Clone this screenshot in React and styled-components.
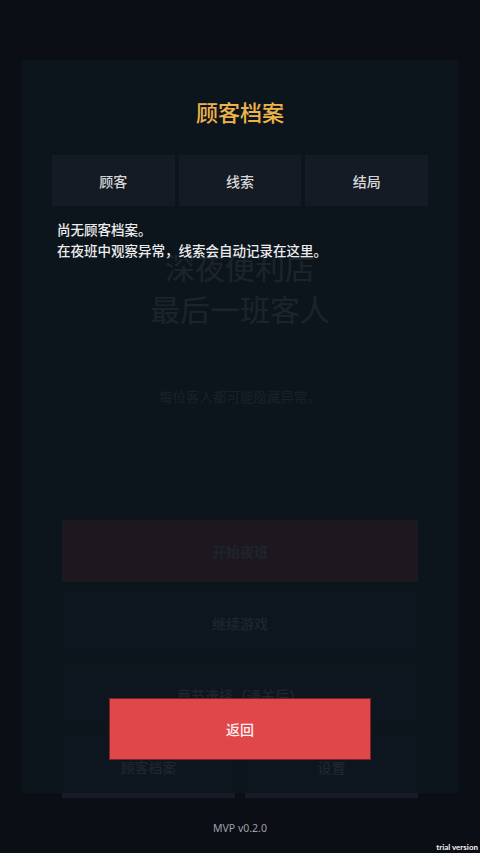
import styled, { createGlobalStyle } from "styled-components";

const GlobalStyle = createGlobalStyle`
  * { box-sizing: border-box; }
  html, body {
    margin: 0;
    padding: 0;
    background: #0c0e16;
    font-family: "Noto Sans", "Noto Sans CJK SC", sans-serif;
  }
`;

const Screen = styled.div`
  position: relative;
  height: 853px;
  overflow: hidden;
  display: flex;
  flex-direction: column;
  align-items: center;
  padding: 247px 62px 0;
  background: #0c0e16;
`;

const GameTitle = styled.h1`
  margin: 0;
  font-size: 30px;
  line-height: 42px;
  font-weight: 400;
  color: #c4c8ce;
  text-align: center;
`;

const Tagline = styled.p`
  margin: 56px 0 0;
  font-size: 13.5px;
  line-height: 20px;
  color: #a0a4aa;
`;

const Menu = styled.div`
  width: 100%;
  flex: none;
  margin-top: 113px;
  display: flex;
  flex-direction: column;
  gap: 10px;
`;

const MenuRow = styled.div`
  display: flex;
  gap: 10px;
`;

const MenuButton = styled.button`
  flex: ${p => (p.half ? "1" : "none")};
  height: 62px;
  border: none;
  background: ${p => (p.primary ? "#d63c38" : "#171b26")};
  color: #d8d8dc;
  font-family: inherit;
  font-size: 14px;
  font-weight: 500;
`;

const Version = styled.div`
  margin-top: 22px;
  font-size: 10.5px;
  line-height: 16px;
  color: #9ca0a8;
`;

const Modal = styled.div`
  position: absolute;
  top: 60px;
  bottom: 60px;
  left: 21px;
  right: 21px;
  background: rgba(13, 22, 29, 0.92);
  display: flex;
  flex-direction: column;
  align-items: center;
  padding: 37px 31px 33px;
`;

const ModalTitle = styled.h2`
  margin: 0;
  font-size: 22px;
  line-height: 30px;
  font-weight: 500;
  color: #eeb24a;
`;

const Tabs = styled.div`
  width: 100%;
  margin-top: 28px;
  display: grid;
  grid-template-columns: repeat(3, 1fr);
  gap: 4px;
`;

const Tab = styled.button`
  height: 51px;
  border: none;
  background: #151b24;
  color: #d6d6d8;
  font-family: inherit;
  font-size: 14px;
  font-weight: 500;
`;

const Empty = styled.div`
  width: 100%;
  margin-top: 14px;
  padding-left: 5px;
  font-size: 13.5px;
  line-height: 21px;
  font-weight: 500;
  color: #ececec;
`;

const BackButton = styled.button`
  margin-top: auto;
  width: 262px;
  height: 62px;
  border: 1px solid #7a2226;
  background: #e0474b;
  color: #fff0f0;
  font-family: inherit;
  font-size: 14px;
  font-weight: 500;
`;

const Watermark = styled.div`
  position: absolute;
  right: 2px;
  bottom: 1px;
  font-family: Lato, sans-serif;
  font-size: 8px;
  font-weight: 700;
  color: #f4f4f4;
`;

export default function App() {
  return (
    <>
      <GlobalStyle />
      <Screen>
        <GameTitle>
          深夜便利店
          <br />
          最后一班客人
        </GameTitle>
        <Tagline>每位客人都可能隐藏异常。</Tagline>
        <Menu>
          <MenuButton primary>开始夜班</MenuButton>
          <MenuButton>继续游戏</MenuButton>
          <MenuButton>章节选择（通关后）</MenuButton>
          <MenuRow>
            <MenuButton half>顾客档案</MenuButton>
            <MenuButton half>设置</MenuButton>
          </MenuRow>
        </Menu>
        <Version>MVP v0.2.0</Version>

        <Modal>
          <ModalTitle>顾客档案</ModalTitle>
          <Tabs>
            <Tab>顾客</Tab>
            <Tab>线索</Tab>
            <Tab>结局</Tab>
          </Tabs>
          <Empty>
            尚无顾客档案。
            <br />
            在夜班中观察异常，线索会自动记录在这里。
          </Empty>
          <BackButton>返回</BackButton>
        </Modal>
        <Watermark>trial version</Watermark>
      </Screen>
    </>
  );
}
